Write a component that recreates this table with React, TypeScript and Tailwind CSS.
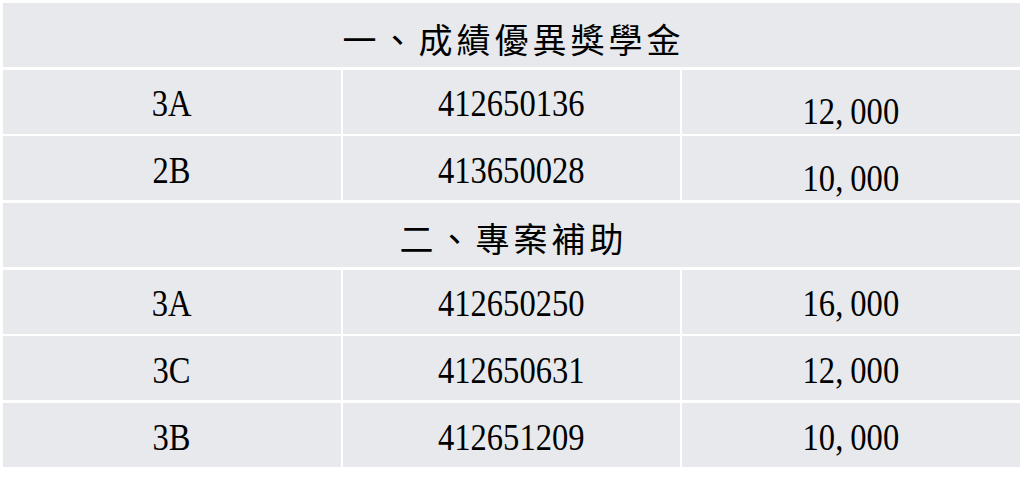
const num = "font-['Liberation_Serif','Noto_Sans_CJK_TC',serif] text-[37px] text-black";
const cjk = "font-['Noto_Sans_CJK_TC','Noto_Sans_CJK_SC',sans-serif] text-[34px] tracking-[4px] text-black";

type Row =
  | { kind: "title"; text: string }
  | { kind: "data"; cls: string; id: string; amount: string; low?: boolean };

const rows: Row[] = [
  { kind: "title", text: "一、成績優異獎學金" },
  { kind: "data", cls: "3A", id: "412650136", amount: "12,000", low: true },
  { kind: "data", cls: "2B", id: "413650028", amount: "10,000", low: true },
  { kind: "title", text: "二、專案補助" },
  { kind: "data", cls: "3A", id: "412650250", amount: "16,000" },
  { kind: "data", cls: "3C", id: "412650631", amount: "12,000" },
  { kind: "data", cls: "3B", id: "412651209", amount: "10,000" },
];

// digits in the picture are narrow, so squeeze the serif a bit
const Num = ({ value }: { value: string }) => {
  const parts = value.split(",");
  return (
    <span className="inline-block scale-x-[0.88]">
      {parts.map((p, i) => (
        <span key={i}>
          {p}
          {i < parts.length - 1 && <span className="mr-[8px]">,</span>}
        </span>
      ))}
    </span>
  );
};

export default function App() {
  return (
    <div className="w-[1024px] h-[477px] bg-white p-[3px] pr-[4px]">
      <div className="grid grid-cols-3 grid-rows-7 gap-x-[2px] gap-y-[2.5px] w-[1017px] h-[464px]">
        {rows.map((r, i) =>
          r.kind === "title" ? (
            <div
              key={i}
              className="col-span-3 bg-[#e7e9ec] flex items-center justify-center pt-[6px] pl-[4px]"
            >
              <span className={cjk}>{r.text}</span>
            </div>
          ) : (
            [
              <div key={i + "a"} className="bg-[#e7e9ec] flex items-center justify-center pt-[5px]">
                <span className={num}>
                  <Num value={r.cls} />
                </span>
              </div>,
              <div key={i + "b"} className="bg-[#e7e9ec] flex items-center justify-center pt-[5px]">
                <span className={num}>
                  <Num value={r.id} />
                </span>
              </div>,
              <div
                key={i + "c"}
                className={
                  "bg-[#e7e9ec] flex items-center justify-center " +
                  (r.low ? "pt-[20px]" : "pt-[5px]")
                }
              >
                <span className={num}>
                  <Num value={r.amount} />
                </span>
              </div>,
            ]
          )
        )}
      </div>
    </div>
  );
}
